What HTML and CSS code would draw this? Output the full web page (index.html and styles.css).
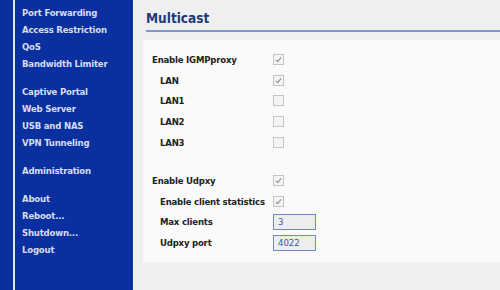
FILE: index.html
```html
<!DOCTYPE html>
<html lang="en">

<head>
    <meta charset="UTF-8">
    <title>Multicast</title>
    <link rel="stylesheet" href="styles.css">
</head>

<body>
    <!-- Menu -->
    <div class="sidebar">
        <div class="menu">
            <div class="group">
                <a href="#">Port Forwarding</a>
                <a href="#">Access Restriction</a>
                <a href="#">QoS</a>
                <a href="#">Bandwidth Limiter</a>
            </div>
            <div class="group">
                <a href="#">Captive Portal</a>
                <a href="#">Web Server</a>
                <a href="#">USB and NAS</a>
                <a href="#">VPN Tunneling</a>
            </div>
            <div class="group">
                <a href="#">Administration</a>
            </div>
            <div class="group">
                <a href="#">About</a>
                <a href="#">Reboot...</a>
                <a href="#">Shutdown...</a>
                <a href="#">Logout</a>
            </div>
        </div>
    </div>

    <!-- Main Content -->
    <div class="main">
        <h2 class="title">Multicast</h2>
        <div class="section">
            <div class="row">
                <span class="label">Enable IGMPproxy</span>
                <span class="check on"></span>
            </div>
            <div class="row sub">
                <span class="label">LAN</span>
                <span class="check on"></span>
            </div>
            <div class="row sub">
                <span class="label">LAN1</span>
                <span class="check"></span>
            </div>
            <div class="row sub">
                <span class="label">LAN2</span>
                <span class="check"></span>
            </div>
            <div class="row sub">
                <span class="label">LAN3</span>
                <span class="check"></span>
            </div>

            <div class="spacer"></div>

            <div class="row">
                <span class="label">Enable Udpxy</span>
                <span class="check on"></span>
            </div>
            <div class="row sub">
                <span class="label">Enable client statistics</span>
                <span class="check on"></span>
            </div>
            <div class="row sub">
                <span class="label">Max clients</span>
                <input class="field" type="text" value="3">
            </div>
            <div class="row sub">
                <span class="label">Udpxy port</span>
                <input class="field" type="text" value="4022">
            </div>
        </div>
    </div>
</body>

</html>
```

FILE: styles.css
```css
body {
    font-family: "DejaVu Sans Condensed", "Liberation Sans", Arial, sans-serif;
    background-color: #efefef;
    margin: 0;
    padding: 0;
    display: flex;
    min-height: 290px;
}

.sidebar {
    width: 134px;
    background-color: #0a30a0;
    border-right: 1px solid #f8f8f8;
    padding-left: 13px;
    box-sizing: border-box;
}

.menu {
    border-left: 2px solid #e2e7f5;
    padding: 4px 0 0 7px;
    height: 100%;
    box-sizing: border-box;
}

.group {
    margin-bottom: 11px;
}

.menu a {
    display: block;
    color: #d6ddf4;
    font-size: 9.5px;
    font-weight: bold;
    letter-spacing: -0.2px;
    line-height: 17px;
    text-decoration: none;
    white-space: nowrap;
}

.main {
    flex: 1;
    padding-left: 9px;
}

.title {
    margin: 10px 0 8px 3px;
    padding-bottom: 4px;
    font-size: 13.5px;
    line-height: 16px;
    color: #1d3a7c;
    border-bottom: 2px solid #8196d0;
}

.section {
    background: #fafafa;
    padding: 9px 0 9px 9px;
}

.row {
    display: flex;
    align-items: center;
    height: 20.8px;
    font-size: 9.5px;
    font-weight: bold;
    letter-spacing: -0.2px;
    color: #222;
}

.label {
    width: 121px;
    flex-shrink: 0;
    white-space: nowrap;
}

.sub .label {
    width: 113px;
    margin-left: 8px;
}

.spacer {
    height: 17px;
}

.check {
    width: 9px;
    height: 9px;
    border: 1px solid #c4c4c4;
    background: #f4f4f4;
    position: relative;
}

.check.on::after {
    content: "";
    position: absolute;
    left: 3px;
    top: 1px;
    width: 2px;
    height: 5px;
    border: solid #888;
    border-width: 0 1.5px 1.5px 0;
    transform: rotate(40deg);
}

.field {
    width: 43px;
    height: 16px;
    box-sizing: border-box;
    border: 1px solid #6f86c8;
    background: #ededed;
    color: #3c56a8;
    font-family: inherit;
    font-size: 9.5px;
    padding: 0 4px;
    margin: 0;
}
```
